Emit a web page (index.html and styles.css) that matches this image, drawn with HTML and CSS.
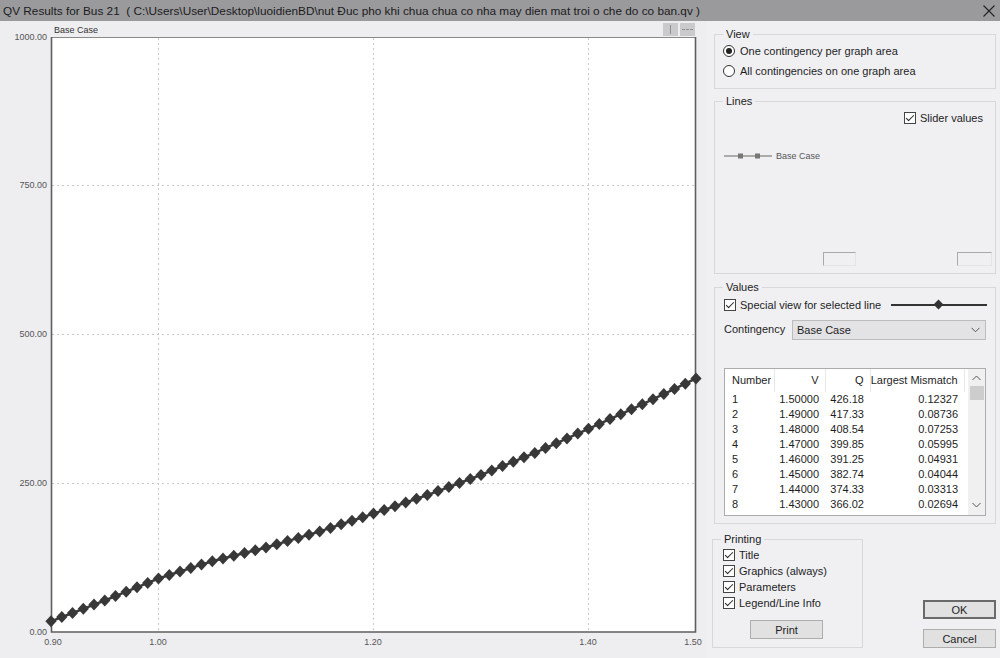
FILE: index.html
```html
<!DOCTYPE html>
<html lang="vi">
<head>
    <meta charset="UTF-8">
    <meta name="viewport" content="width=device-width, initial-scale=1.0">
    <title>QV Results for Bus 21</title>
    <link rel="stylesheet" href="styles.css">
</head>
<body>
    <div class="window">
        <!-- Title bar -->
        <div class="titlebar">
            <span class="title">QV Results for Bus 21  ( C:\Users\User\Desktop\luoidienBD\nut Đuc pho khi chua chua co nha may dien mat troi o che do co ban.qv )</span>
            <svg class="close" width="14" height="14" viewBox="0 0 14 14"><path d="M1.5 1.5 L12.5 12.5 M12.5 1.5 L1.5 12.5" stroke="#222" stroke-width="1.1"/></svg>
        </div>

        <div class="main">
            <!-- QV curve -->
            <div class="graph">
                <svg id="chart" width="706" height="637" viewBox="0 21 706 637">
                    <rect x="51" y="37" width="645" height="595" fill="#fff"/>
                    <g class="grid">
                        <line x1="158.5" y1="38" x2="158.5" y2="631"/>
                        <line x1="373.5" y1="38" x2="373.5" y2="631"/>
                        <line x1="588.5" y1="38" x2="588.5" y2="631"/>
                        <line x1="52" y1="185.5" x2="695" y2="185.5"/>
                        <line x1="52" y1="334.5" x2="695" y2="334.5"/>
                        <line x1="52" y1="483.5" x2="695" y2="483.5"/>
                    </g>
                    <line class="frame-top" x1="51" y1="37.5" x2="696" y2="37.5"/>
                    <path class="frame" d="M51.5 37 V632 H695.5 V37"/>

                    <g class="axis-y">
                        <text x="47" y="40">1000.00</text>
                        <text x="47" y="188">750.00</text>
                        <text x="47" y="337">500.00</text>
                        <text x="47" y="486">250.00</text>
                        <text x="47" y="635">0.00</text>
                    </g>
                    <g class="axis-x">
                        <text x="53" y="645">0.90</text>
                        <text x="158" y="645">1.00</text>
                        <text x="373" y="645">1.20</text>
                        <text x="588" y="645">1.40</text>
                        <text x="693" y="645">1.50</text>
                    </g>
                    <text class="case-title" x="54" y="33">Base Case</text>

                    <rect class="mini-btn" x="663" y="23" width="15" height="13"/>
                    <line class="mini-icon" x1="670.5" y1="25" x2="670.5" y2="34"/>
                    <rect class="mini-btn" x="680" y="23" width="15" height="13"/>
                    <line class="mini-icon" x1="682" y1="29.5" x2="693" y2="29.5" stroke-dasharray="3 1"/>

                    <polyline id="curve" class="curve" points=""/>
                    <g id="marks" class="marks"></g>
                </svg>
            </div>

            <!-- Options -->
            <div class="side">
                <div class="group view">
                    <span class="group-label">View</span>
                    <div class="option"><span class="radio on"></span>One contingency per graph area</div>
                    <div class="option"><span class="radio"></span>All contingencies on one graph area</div>
                </div>

                <div class="group lines">
                    <span class="group-label">Lines</span>
                    <div class="option slider-values"><span class="check on"></span>Slider values</div>
                    <div class="legend-item">
                        <svg width="48" height="8" viewBox="0 0 48 8">
                            <line x1="0" y1="4" x2="48" y2="4" stroke="#666" stroke-width="1.2"/>
                            <rect x="14" y="1.5" width="5" height="5" fill="#777"/>
                            <rect x="31" y="1.5" width="5" height="5" fill="#777"/>
                        </svg>
                        <span>Base Case</span>
                    </div>
                    <div class="slider-boxes">
                        <span class="edit-box"></span>
                        <span class="edit-box wide"></span>
                    </div>
                </div>

                <div class="group values">
                    <span class="group-label">Values</span>
                    <div class="special-row">
                        <div class="option"><span class="check on"></span>Special view for selected line</div>
                        <div class="track"><span class="thumb"></span></div>
                    </div>
                    <div class="contingency-row">
                        <span class="field-label">Contingency</span>
                        <div class="dropdown">
                            <span>Base Case</span>
                            <svg width="9" height="6" viewBox="0 0 9 6"><path d="M0.5 0.8 L4.5 4.8 L8.5 0.8" fill="none" stroke="#555" stroke-width="1"/></svg>
                        </div>
                    </div>
                    <div class="listview">
                        <table>
                            <colgroup>
                                <col class="c-num"><col class="c-v"><col class="c-q"><col class="c-mis"><col>
                            </colgroup>
                            <thead>
                                <tr><th class="left">Number</th><th>V</th><th>Q</th><th>Largest Mismatch</th><th class="blank"></th></tr>
                            </thead>
                            <tbody>
                                <tr><td class="left">1</td><td>1.50000</td><td>426.18</td><td>0.12327</td><td></td></tr>
                                <tr><td class="left">2</td><td>1.49000</td><td>417.33</td><td>0.08736</td><td></td></tr>
                                <tr><td class="left">3</td><td>1.48000</td><td>408.54</td><td>0.07253</td><td></td></tr>
                                <tr><td class="left">4</td><td>1.47000</td><td>399.85</td><td>0.05995</td><td></td></tr>
                                <tr><td class="left">5</td><td>1.46000</td><td>391.25</td><td>0.04931</td><td></td></tr>
                                <tr><td class="left">6</td><td>1.45000</td><td>382.74</td><td>0.04044</td><td></td></tr>
                                <tr><td class="left">7</td><td>1.44000</td><td>374.33</td><td>0.03313</td><td></td></tr>
                                <tr><td class="left">8</td><td>1.43000</td><td>366.02</td><td>0.02694</td><td></td></tr>
                            </tbody>
                        </table>
                        <div class="scrollbar">
                            <div class="arrow">
                                <svg width="9" height="6" viewBox="0 0 9 6"><path d="M0.5 5 L4.5 1 L8.5 5" fill="none" stroke="#555" stroke-width="1"/></svg>
                            </div>
                            <div class="scroll-thumb"></div>
                            <div class="arrow down">
                                <svg width="9" height="6" viewBox="0 0 9 6"><path d="M0.5 1 L4.5 5 L8.5 1" fill="none" stroke="#555" stroke-width="1"/></svg>
                            </div>
                        </div>
                    </div>
                </div>

                <div class="bottom-row">
                    <div class="group printing">
                        <span class="group-label">Printing</span>
                        <div class="option print-opt"><span class="check on"></span>Title</div>
                        <div class="option print-opt"><span class="check on"></span>Graphics (always)</div>
                        <div class="option print-opt"><span class="check on"></span>Parameters</div>
                        <div class="option print-opt"><span class="check on"></span>Legend/Line Info</div>
                        <button type="button" class="btn print-btn">Print</button>
                    </div>
                    <div class="dialog-buttons">
                        <button type="button" class="btn default">OK</button>
                        <button type="button" class="btn">Cancel</button>
                    </div>
                </div>
            </div>
        </div>
    </div>

    <script>
        // Q at a few voltages; the top end comes from the table
        const anchors = [
            [0.90, 18], [0.95, 53], [1.00, 90], [1.05, 119], [1.10, 142],
            [1.15, 169], [1.20, 199], [1.25, 230], [1.30, 264], [1.35, 301],
            [1.40, 341.5], [1.43, 366.02], [1.44, 374.33], [1.45, 382.74],
            [1.46, 391.25], [1.47, 399.85], [1.48, 408.54], [1.49, 417.33], [1.50, 426.18]
        ];

        function qAt(v) {
            for (let i = 1; i < anchors.length; i++) {
                const a = anchors[i - 1], b = anchors[i];
                if (v <= b[0] + 1e-9) {
                    const t = (v - a[0]) / (b[0] - a[0]);
                    return a[1] + t * (b[1] - a[1]);
                }
            }
            return anchors[anchors.length - 1][1];
        }

        const pts = [];
        let marks = "";
        for (let i = 0; i <= 60; i++) {
            const v = 0.90 + i * 0.01;
            const x = 51 + (v - 0.90) * 1075;
            const y = 632 - qAt(v) * 0.595;
            pts.push(x.toFixed(1) + "," + y.toFixed(1));
            marks += `<path d="M${x.toFixed(1)} ${(y - 6).toFixed(1)} l5.6 6 l-5.6 6 l-5.6 -6 z"/>`;
        }
        document.getElementById("curve").setAttribute("points", pts.join(" "));
        document.getElementById("marks").innerHTML = marks;
    </script>
</body>
</html>
```

FILE: styles.css
```css
html, body {
    margin: 0;
    padding: 0;
}

body {
    width: 1000px;
    height: 658px;
    overflow: hidden;
    background-color: #f0f0f3;
    font-family: "Liberation Sans", Arial, sans-serif;
    font-size: 11px;
    color: #1e1e1e;
}

.window {
    display: flex;
    flex-direction: column;
    height: 658px;
}

/* Title bar */
.titlebar {
    height: 21px;
    flex: none;
    display: flex;
    align-items: center;
    justify-content: space-between;
    padding: 0 4px 0 3px;
    background-color: #9a9a9c;
    box-sizing: border-box;
}

.title {
    white-space: pre;
    font-size: 11.8px;
    color: #1c1c1c;
}

.main {
    display: flex;
    height: 637px;
}

/* Graph */
.graph {
    width: 706px;
    flex: none;
    background-color: #eeeef1;
}

.graph svg {
    display: block;
}

.grid line {
    stroke: #c8c8c8;
    stroke-width: 1;
    stroke-dasharray: 2 3;
}

.frame {
    fill: none;
    stroke: #5f5f5f;
    stroke-width: 1.6;
}

.frame-top {
    stroke: #8a8a8a;
    stroke-width: 1;
}

.axis-y text,
.axis-x text,
.case-title {
    font-family: "Liberation Sans", Arial, sans-serif;
    font-size: 9px;
    fill: #555;
}

.axis-y text {
    text-anchor: end;
}

.axis-x text {
    text-anchor: middle;
}

.case-title {
    fill: #333;
}

.mini-btn {
    fill: #cacacc;
}

.mini-icon {
    stroke: #8e8e8e;
    stroke-width: 1;
}

.curve {
    fill: none;
    stroke: #3a3a3a;
    stroke-width: 2.5;
}

.marks path {
    fill: #383838;
}

/* Right side */
.side {
    width: 294px;
    flex: none;
    box-sizing: border-box;
    padding: 13px 4px 0 8px;
    display: flex;
    flex-direction: column;
}

.group {
    position: relative;
    box-sizing: border-box;
    border: 1px solid #d8d8dc;
}

.group-label {
    position: absolute;
    top: -7px;
    left: 8px;
    padding: 0 3px;
    line-height: 13px;
    background-color: #f0f0f3;
    color: #222;
}

.option {
    display: flex;
    align-items: center;
    gap: 5px;
    white-space: nowrap;
}

.radio {
    width: 12px;
    height: 12px;
    box-sizing: border-box;
    border: 1px solid #333;
    border-radius: 50%;
    background-color: #fff;
    display: flex;
    align-items: center;
    justify-content: center;
}

.radio.on::after {
    content: "";
    width: 6px;
    height: 6px;
    border-radius: 50%;
    background-color: #222;
}

.check {
    width: 12px;
    height: 12px;
    box-sizing: border-box;
    border: 1px solid #444;
    background-color: #fff;
    display: flex;
    justify-content: center;
    flex: none;
}

.check.on::after {
    content: "";
    width: 3px;
    height: 7px;
    border-right: 1.3px solid #222;
    border-bottom: 1.3px solid #222;
    transform: rotate(45deg);
}

/* View */
.view {
    height: 55px;
    padding: 6px 0 0 8px;
}

.view .option {
    height: 20px;
}

/* Lines */
.lines {
    margin-top: 12px;
    height: 173px;
    padding: 8px 12px 7px 9px;
    display: flex;
    flex-direction: column;
}

.slider-values {
    align-self: flex-end;
    height: 16px;
    gap: 4px;
}

.legend-item {
    margin-top: 24px;
    height: 12px;
    display: flex;
    align-items: center;
    gap: 4px;
    font-size: 9px;
    color: #555;
}

.slider-boxes {
    margin-top: auto;
    margin-right: -9px;
    display: flex;
    justify-content: flex-end;
    gap: 101px;
}

.edit-box {
    width: 33px;
    height: 14px;
    box-sizing: border-box;
    border: 1px solid;
    border-color: #a9a9a9 #e4e4e6 #e4e4e6 #a9a9a9;
    background-color: #f0f0f2;
}

.edit-box.wide {
    width: 35px;
}

/* Values */
.values {
    margin-top: 13px;
    height: 237px;
    padding: 10px 9px 8px 9px;
}

.special-row {
    display: flex;
    align-items: center;
    height: 14px;
}

.special-row .option {
    gap: 4px;
}

.track {
    position: relative;
    margin-left: auto;
    margin-right: -1px;
    width: 96px;
    height: 2px;
    background-color: #333;
}

.thumb {
    position: absolute;
    left: 44px;
    top: -3px;
    width: 7px;
    height: 7px;
    background-color: #333;
    transform: rotate(45deg);
}

.contingency-row {
    margin-top: 8px;
    height: 20px;
    display: flex;
    align-items: center;
}

.field-label {
    width: 68px;
    flex: none;
    margin-top: -2px;
}

.dropdown {
    flex: 1;
    height: 20px;
    box-sizing: border-box;
    border: 1px solid #bcbcbc;
    background-color: #e3e3e5;
    padding: 0 5px 0 4px;
    display: flex;
    align-items: center;
    justify-content: space-between;
}

.listview {
    margin-top: 28px;
    height: 148px;
    box-sizing: border-box;
    border: 1px solid #acacac;
    background-color: #fff;
    display: flex;
    overflow: hidden;
}

.listview table {
    width: 243px;
    flex: none;
    align-self: flex-start;
    table-layout: fixed;
    border-collapse: collapse;
}

.c-num { width: 49px; }
.c-v { width: 51px; }
.c-q { width: 45px; }
.c-mis { width: 94px; }

.listview th {
    height: 22px;
    padding: 0 6px 1px 0;
    font-weight: normal;
    text-align: right;
    border-right: 1px solid #e8e8e8;
    white-space: nowrap;
}

.listview th.blank {
    border-right: none;
}

.listview td {
    height: 15px;
    line-height: 15px;
    padding: 0 6px 0 0;
    text-align: right;
    white-space: nowrap;
}

.listview .left {
    text-align: left;
    padding-left: 7px;
}

.scrollbar {
    width: 17px;
    flex: none;
    background-color: #f0f0f0;
    display: flex;
    flex-direction: column;
    align-items: center;
}

.arrow {
    height: 17px;
    display: flex;
    align-items: center;
    justify-content: center;
}

.arrow.down {
    margin-top: auto;
    margin-bottom: 2px;
}

.scroll-thumb {
    width: 14px;
    height: 14px;
    background-color: #cdcdcd;
}

/* Printing + dialog buttons */
.bottom-row {
    margin-top: 15px;
    display: flex;
    align-items: flex-end;
}

.printing {
    width: 151px;
    height: 109px;
    margin-left: -2px;
    padding: 7px 0 0 10px;
}

.print-opt {
    height: 16px;
    gap: 4px;
}

.btn {
    width: 73px;
    height: 19px;
    box-sizing: border-box;
    padding: 0;
    border: 1px solid #adadad;
    background-color: #e1e1e1;
    font-family: "Liberation Sans", Arial, sans-serif;
    font-size: 11px;
    color: #1e1e1e;
}

.print-btn {
    display: block;
    margin: 9px 0 0 27px;
}

.dialog-buttons {
    margin-left: auto;
    display: flex;
    flex-direction: column;
    gap: 10px;
}

.btn.default {
    border: 2px solid #6a6a6a;
}
```
